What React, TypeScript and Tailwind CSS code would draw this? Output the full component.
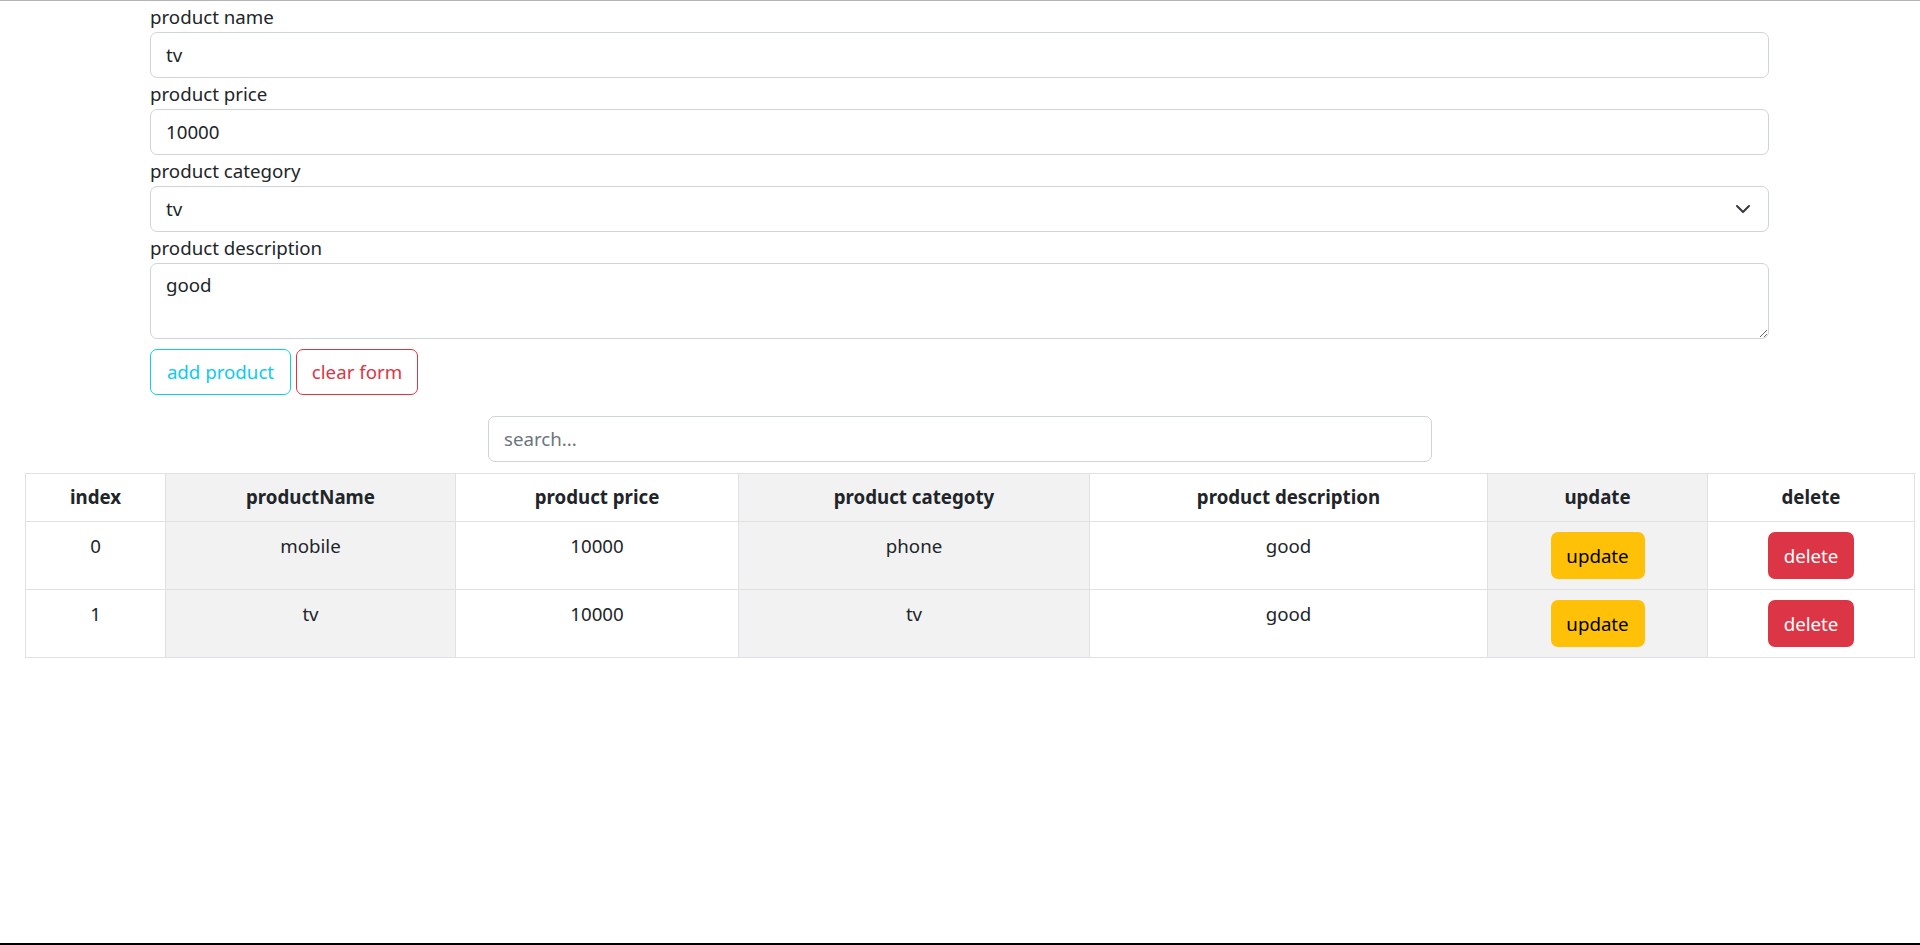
import React from "react";

const rows = [
  { i: 0, name: "mobile", price: "10000", cat: "phone", desc: "good" },
  { i: 1, name: "tv", price: "10000", cat: "tv", desc: "good" },
];

function Label({ children }: { children: React.ReactNode }) {
  return <div className="h-[31px] leading-[31px]">{children}</div>;
}

function Field({ value }: { value: string }) {
  return (
    <div className="h-[46px] border border-[#ced4da] rounded-[7px] pl-[15px] flex items-center leading-[28.8px]">
      {value}
    </div>
  );
}

export default function App() {
  const th = "border border-[#dee2e6] px-[10px] h-[48px] leading-[28.8px] font-bold text-center align-middle";
  const td = "border border-[#dee2e6] px-[10px] pt-[10px] h-[68px] leading-[28.8px] text-center align-top";
  const stripe = "bg-[#f2f2f2]";
  return (
    <div className="h-[945px] overflow-hidden bg-white border-t border-t-[#b4b4b4] border-b-2 border-b-black font-['Noto_Sans',sans-serif] text-[18.7px] text-[#212529]">
      <div className="ml-[150px] w-[1619px]">
        <Label>product name</Label>
        <Field value="tv" />
        <Label>product price</Label>
        <Field value="10000" />
        <Label>product category</Label>
        <div className="h-[46px] border border-[#ced4da] rounded-[7px] pl-[15px] pr-[17px] flex items-center justify-between leading-[28.8px]">
          <span>tv</span>
          <svg width="16" height="16" viewBox="0 0 16 16" fill="none">
            <path d="m2 5 6 6 6-6" stroke="#343a40" strokeWidth="2" strokeLinecap="round" strokeLinejoin="round" />
          </svg>
        </div>
        <Label>product description</Label>
        <textarea
          readOnly
          defaultValue="good"
          className="block w-full h-[76px] border border-[#ced4da] rounded-[7px] px-[15px] py-[7px] leading-[28.8px] resize-y outline-none text-[#212529]"
        />
        <div className="mt-[10px] flex gap-[5px]">
          <button className="h-[46px] w-[141px] border border-[#0dcaf0] text-[#0dcaf0] rounded-[7px] flex items-center justify-center">
            add product
          </button>
          <button className="h-[46px] w-[122px] border border-[#dc3545] text-[#dc3545] rounded-[7px] flex items-center justify-center">
            clear form
          </button>
        </div>
      </div>
      <div className="mt-[21px] flex justify-center">
        <div className="w-[944px] h-[46px] border border-[#ced4da] rounded-[7px] pl-[15px] flex items-center text-[#6c757d]">
          search...
        </div>
      </div>
      <div className="mt-[11px] ml-[25px] w-[1889px]">
        <table className="w-full border-collapse table-fixed">
          <colgroup>
            <col className="w-[140px]" />
            <col className="w-[290px]" />
            <col className="w-[283px]" />
            <col className="w-[351px]" />
            <col className="w-[398px]" />
            <col className="w-[220px]" />
            <col className="w-[207px]" />
          </colgroup>
          <thead>
            <tr>
              <th className={th}>index</th>
              <th className={`${th} ${stripe}`}>productName</th>
              <th className={th}>product price</th>
              <th className={`${th} ${stripe}`}>product categoty</th>
              <th className={th}>product description</th>
              <th className={`${th} ${stripe}`}>update</th>
              <th className={th}>delete</th>
            </tr>
          </thead>
          <tbody>
            {rows.map((r) => (
              <tr key={r.i}>
                <td className={td}>{r.i}</td>
                <td className={`${td} ${stripe}`}>{r.name}</td>
                <td className={td}>{r.price}</td>
                <td className={`${td} ${stripe}`}>{r.cat}</td>
                <td className={td}>{r.desc}</td>
                <td className={`${td} ${stripe}`}>
                  <button className="inline-flex items-center justify-center pt-[2px] h-[47px] w-[94px] rounded-[7px] bg-[#ffc107] text-black">
                    update
                  </button>
                </td>
                <td className={td}>
                  <button className="inline-flex items-center justify-center pt-[2px] h-[47px] w-[86px] rounded-[7px] bg-[#dc3545] text-white">
                    delete
                  </button>
                </td>
              </tr>
            ))}
          </tbody>
        </table>
      </div>
    </div>
  );
}
